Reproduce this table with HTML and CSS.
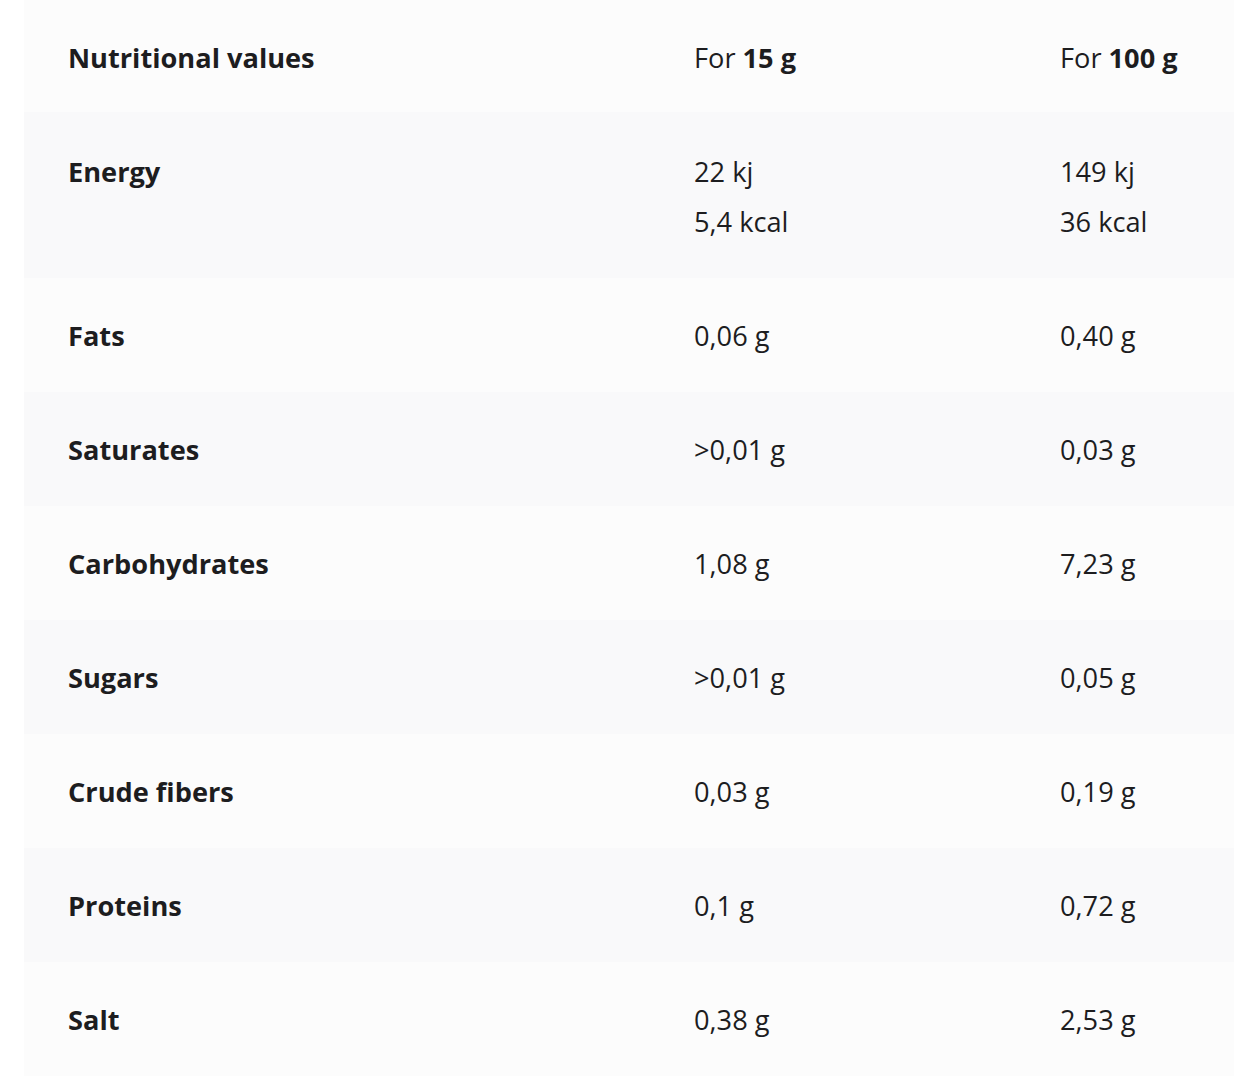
FILE: index.html
```html
<!DOCTYPE html>
<html lang="en">
<head>
<meta charset="utf-8">
<title>Nutritional values</title>
<link rel="stylesheet" href="styles.css">
</head>
<body>
<div class="table">
  <div class="row row-head">
    <div class="cell label">Nutritional values</div>
    <div class="cell">For <b>15 g</b></div>
    <div class="cell">For <b>100 g</b></div>
  </div>
  <div class="row row-double alt">
    <div class="cell label">Energy</div>
    <div class="cell">22 kj<br>5,4 kcal</div>
    <div class="cell">149 kj<br>36 kcal</div>
  </div>
  <div class="row">
    <div class="cell label">Fats</div>
    <div class="cell">0,06 g</div>
    <div class="cell">0,40 g</div>
  </div>
  <div class="row alt">
    <div class="cell label">Saturates</div>
    <div class="cell">&gt;0,01 g</div>
    <div class="cell">0,03 g</div>
  </div>
  <div class="row">
    <div class="cell label">Carbohydrates</div>
    <div class="cell">1,08 g</div>
    <div class="cell">7,23 g</div>
  </div>
  <div class="row alt">
    <div class="cell label">Sugars</div>
    <div class="cell">&gt;0,01 g</div>
    <div class="cell">0,05 g</div>
  </div>
  <div class="row">
    <div class="cell label">Crude fibers</div>
    <div class="cell">0,03 g</div>
    <div class="cell">0,19 g</div>
  </div>
  <div class="row alt">
    <div class="cell label">Proteins</div>
    <div class="cell">0,1 g</div>
    <div class="cell">0,72 g</div>
  </div>
  <div class="row">
    <div class="cell label">Salt</div>
    <div class="cell">0,38 g</div>
    <div class="cell">2,53 g</div>
  </div>
</div>
</body>
</html>
```

FILE: styles.css
```css
html, body {
  margin: 0;
  padding: 0;
  background: #ffffff;
  overflow: hidden;
}

body {
  font-family: "Open Sans", "Noto Sans", sans-serif;
  font-size: 27.2px;
  line-height: 50px;
  color: #1d1d1f;
}

.table {
  margin-left: 24px;
  width: 1210px;
}

.row {
  display: grid;
  grid-template-columns: 626px 366px 1fr;
  background: #fcfcfc;
  padding: 33px 0 31px;
}

.row.alt {
  background: #f9f9fa;
}

.row-head {
  padding: 33px 0 29px;
}

.row-double {
  padding: 35px 0 31px;
}

.cell {
  padding-left: 44px;
  white-space: nowrap;
}

.label,
.cell b {
  font-weight: 700;
}
```
